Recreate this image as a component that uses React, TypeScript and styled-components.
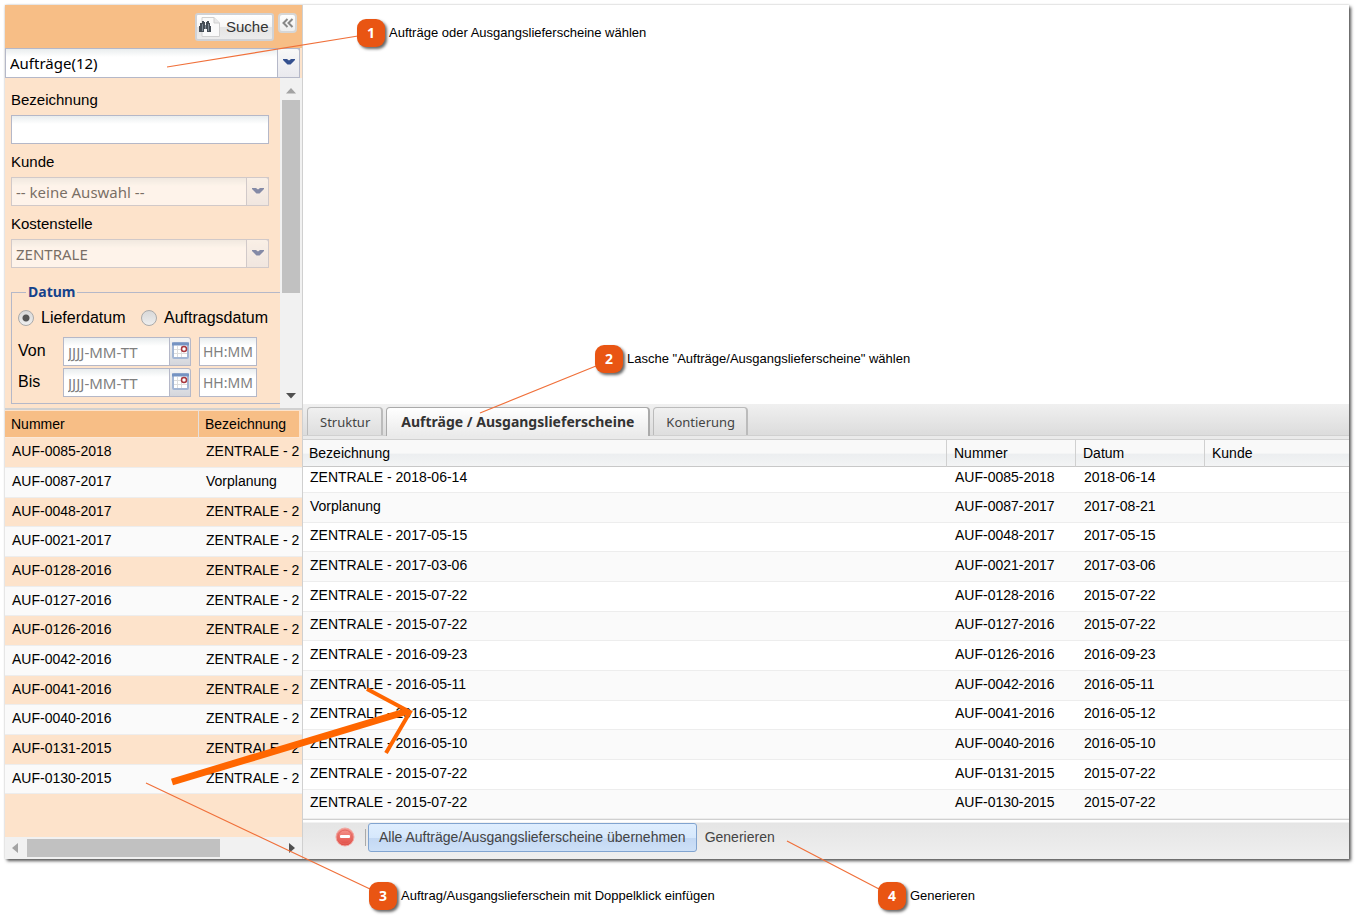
import React from "react";
import styled, { createGlobalStyle, css } from "styled-components";

const sans = `"Liberation Sans", Arial, sans-serif`;
const human = `"Noto Sans", Tahoma, sans-serif`;

const GlobalStyle = createGlobalStyle`
  * { box-sizing: border-box; }
  body { margin: 0; background: #fff; color: #000; font: 14px/20px ${sans}; }
  button, input, select { font: inherit; color: inherit; margin: 0; border-radius: 0; }
`;

const Page = styled.div`
  position: relative;
  min-height: 100vh;
  display: flex;
  flex-direction: column;
  padding: 5px 9px 62px 5px;
  overflow: hidden;
`;

const Frame = styled.div`
  flex: 1;
  display: flex;
  background: #fff;
  box-shadow: 2px 2px 3px #555, 0 0 2px #ccc;
`;

const Sidebar = styled.aside`
  flex: 0 0 298px;
  width: 298px;
  display: flex;
  flex-direction: column;
  background: #fde3cb;
  border-right: 1px solid #d0d0d0;
`;

const SearchBar = styled.header`
  display: flex;
  justify-content: flex-end;
  align-items: flex-start;
  gap: 4px;
  height: 43px;
  padding: 8px 5px 0;
  background: #f7be86;
`;

const SearchButton = styled.button`
  display: flex;
  align-items: center;
  gap: 5px;
  width: 79px;
  height: 28px;
  padding: 0 2px;
  border: 2px solid #d0d2d6;
  border-radius: 3px;
  background: linear-gradient(#fff, #f6f6f6 48%, #e4e4e4 52%, #ececec);
  color: #333;
  font-size: 15px;
`;

const CollapseButton = styled.button`
  display: grid;
  place-items: center;
  width: 19px;
  height: 20px;
  padding: 0;
  border: 2px solid #d6d6d6;
  border-radius: 4px;
  background: linear-gradient(#fff, #eee);
`;

const fieldSkin = css`
  border: 1px solid #b5b8c8;
  background: linear-gradient(#e9edee, #fff 8px);
`;

const Combo = styled.div<{ $muted?: boolean; $top?: boolean }>`
  display: flex;
  position: relative;
  height: ${(p) => (p.$top ? 30 : 29)}px;
  margin-right: ${(p) => (p.$top ? 2 : 0)}px;
  opacity: ${(p) => (p.$muted ? 0.6 : 1)};
`;

const Select = styled.select`
  ${fieldSkin}
  appearance: none;
  width: 100%;
  padding: 0 26px 0 4px;
  font-family: ${human};
  font-size: 15px;
  opacity: 1;
  color: #000;
  &:disabled { color: #222; }
`;

const Trigger = styled.span`
  position: absolute;
  inset: 0 0 0 auto;
  width: 23px;
  display: grid;
  place-items: center;
  padding-bottom: 2px;
  border: 1px solid #b5b8c8;
  border-top-right-radius: 3px;
  background: linear-gradient(#f8f8f8, #e9e9ee);
  pointer-events: none;
`;

const FormArea = styled.div`
  display: flex;
  height: 332px;
  border-bottom: 2px solid #d0d0d0;
`;

const Form = styled.form`
  flex: 1;
  min-width: 0;
  padding: 12px 0 0 6px;
`;

const Field = styled.div`
  display: flex;
  flex-direction: column;
  gap: 5px;
  margin: 0 11px 8px 0;
`;

const Label = styled.label`
  font-size: 15px;
  line-height: 20px;
`;

const TextInput = styled.input`
  ${fieldSkin}
  width: 100%;
  height: 29px;
  padding: 0 4px;
  font-family: ${human};
  font-size: 15px;
`;

const DateGroup = styled.fieldset`
  min-width: 0;
  margin: 14px 0 0;
  padding: 6px 0 6px 6px;
  border: 1px solid #b5b8c8;
  border-right: 0;
`;

const Legend = styled.legend`
  margin-left: 8px;
  padding: 0 2px;
  font: bold 14px/20px ${human};
  color: #15428b;
`;

const RadioRow = styled.div`
  display: flex;
  height: 20px;
  margin-bottom: 9px;
`;

const RadioLabel = styled.label`
  display: flex;
  align-items: center;
  gap: 7px;
  width: 123px;
  font-size: 16px;
  white-space: nowrap;
`;

const Radio = styled.input`
  appearance: none;
  flex: none;
  width: 16px;
  height: 16px;
  border: 1px solid #aaa;
  border-radius: 50%;
  background: linear-gradient(#d8d8d8, #eee);
  &:checked {
    background: radial-gradient(circle, #555 3px, transparent 4px), linear-gradient(#d8d8d8, #eee);
  }
`;

const DateRow = styled.div`
  display: flex;
  margin-top: 2px;
`;

const DateLabel = styled.label`
  width: 45px;
  font-size: 16px;
  line-height: 28px;
`;

const DateInput = styled.input`
  ${fieldSkin}
  width: 107px;
  height: 29px;
  padding: 0 4px;
  font-family: ${human};
  font-size: 15px;
  &::placeholder { color: #808080; opacity: 1; }
`;

const TimeInput = styled(DateInput)`
  width: 58px;
  margin-left: 8px;
  padding: 0 3px;
  font-size: 14px;
`;

const CalendarButton = styled.button`
  display: grid;
  justify-items: center;
  align-content: start;
  width: 21px;
  height: 29px;
  padding: 4px 0 0;
  border: 1px solid #b5b8c8;
  border-left: 0;
  border-top-right-radius: 3px;
  background: linear-gradient(#f4f4f4, #d4d6dc);
`;

const VScroll = styled.div`
  flex: 0 0 22px;
  display: flex;
  flex-direction: column;
  align-items: center;
  padding: 10px 2px 9px 2px;
  background: #f1f1f1;
`;

const VThumb = styled.div`
  width: 18px;
  height: 193px;
  margin: 6px 0 auto;
  background: #c1c1c1;
`;

const HScroll = styled.div`
  display: flex;
  align-items: center;
  height: 22px;
  margin-top: auto;
  padding: 0 7px;
  background: #f1f1f1;
`;

const HThumb = styled.div`
  width: 193px;
  height: 18px;
  margin: 0 auto 0 9px;
  background: #c1c1c1;
`;

const Table = styled.table`
  width: 100%;
  table-layout: fixed;
  border-collapse: separate;
  border-spacing: 0;
  th, td {
    overflow: hidden;
    white-space: nowrap;
    text-align: left;
    font-weight: normal;
  }
  td {
    height: 30px;
    border-bottom: 1px solid #ededed;
  }
  tr:nth-child(3n) td { height: 29px; }
  tr:nth-child(even) td { background: #fafafa; }
`;

const OrderTable = styled(Table)`
  th {
    height: 28px;
    padding: 0 0 0 6px;
    background: #f7be86;
    border-top: 1px solid #fde3cb;
    border-bottom: 1px solid #fbe9da;
  }
  th:first-child { border-right: 1px solid #e6e0dc; }
  th:last-child { border-right: 3px solid #fde3cb; }
  td { padding: 0 0 3px 7px; }
`;

const Main = styled.main`
  flex: 1;
  min-width: 0;
  display: flex;
  flex-direction: column;
`;

const Canvas = styled.section`
  flex: 1;
`;

const TabStrip = styled.div`
  display: flex;
  align-items: flex-end;
  height: 32px;
  padding: 0 4px;
  background: linear-gradient(#f0f0f0, #dcdcdc);
  border-bottom: 1px solid #d0d0d0;
`;

const Tab = styled.button<{ $active?: boolean }>`
  height: 28px;
  margin-right: 3px;
  padding: 0 11px 0 12px;
  border: 1px solid #bbb;
  border-width: 1px 2px 0 1px;
  border-radius: 4px 4px 0 0;
  background: linear-gradient(#f0f0f0, #dedede);
  color: #444;
  font: 13px/20px ${human};
  white-space: nowrap;
  ${(p) =>
    p.$active &&
    css`
      height: 29px;
      padding: 0 14px;
      margin-bottom: -1px;
      border-color: #aaa;
      background: linear-gradient(#fff, #eaeaea);
      color: #333;
      font-weight: bold;
      font-size: 14px;
    `}
`;

const TabBase = styled.div`
  height: 4px;
  background: #eaeaea;
  border-bottom: 1px solid #d0d0d0;
`;

const PositionTable = styled(Table)`
  th {
    height: 27px;
    padding: 0 0 0 6px;
    background: linear-gradient(#f9f9f9 50%, #eceef0 55%, #f3f4f5);
    border-bottom: 1px solid #c8c8c8;
  }
  th + th { padding-left: 7px; border-left: 1px solid #d0d0d0; }
  td { padding: 0 0 4px 7px; }
  td + td { padding-left: 9px; }
  tr:first-child td { height: 26px; padding-bottom: 5px; }
`;

const Toolbar = styled.footer`
  display: flex;
  align-items: center;
  height: 40px;
  padding: 0 32px 5px;
  border-top: 1px solid #d0d0d0;
  background: linear-gradient(#fff 2px, #e5e5e5 3px, #efefef);
  color: #444;
`;

const IconButton = styled.button`
  display: grid;
  padding: 0;
  border: 0;
  background: none;
`;

const Separator = styled.span`
  width: 1px;
  height: 17px;
  margin: 0 2px 0 10px;
  background: #aaa;
`;

const ToolButton = styled.button<{ $hot?: boolean }>`
  height: 29px;
  padding: 0 ${(p) => (p.$hot ? 10 : 7)}px;
  border: 1px solid transparent;
  border-radius: 3px;
  background: none;
  font-size: 14px;
  white-space: nowrap;
  ${(p) =>
    p.$hot &&
    css`
      border-color: #81a4d0;
      background: linear-gradient(#dfeefe, #d6e8fc 50%, #c3d8f3 52%, #cde0f7);
    `}
`;

const Overlay = styled.svg`
  position: absolute;
  top: 0;
  left: 0;
  pointer-events: none;
`;

const Callout = styled.div<{ $x: number; $y: number }>`
  position: absolute;
  left: ${(p) => p.$x}px;
  top: ${(p) => p.$y}px;
  display: flex;
  align-items: center;
  gap: 4px;
  font-size: 13px;
  white-space: nowrap;
`;

const Badge = styled.b`
  width: 28px;
  height: 28px;
  border-radius: 9px;
  background: #e95513;
  box-shadow: 2px 2px 3px #666;
  color: #fff;
  font: bold 14px/28px ${human};
  text-align: center;
`;

const Chevron = () => (
  <svg width="12" height="8" viewBox="0 0 12 8">
    <path d="M0 1h4l2 1.500L8 1h4v1L7.500 6.500h-3L0 2z" fill="#34508f" />
  </svg>
);

const Binoculars = () => (
  <svg width="22" height="22" viewBox="0 0 22 22">
    <path d="M3 1.500h12l5.500 5.500v13.500H3z" fill="#fafafa" stroke="#d0d0d0" />
    <path d="M15 1.500V7h5.500" fill="#e8e8e8" stroke="#d0d0d0" />
    <path d="M3 5h2v1h1v3h1V6h1V5h2v2h1v3h1v6H8v-3H5v3H0v-6h1V7h2z" fill="#454d55" />
    <path d="M3.500 8v7M6.500 9v4M9.500 8v7" stroke="#7f8a94" />
  </svg>
);

const Calendar = () => (
  <svg width="17" height="17" viewBox="0 0 17 17">
    <rect x="1" y="1" width="15" height="15" rx="1" fill="#fff" stroke="#a3b6d4" strokeWidth="2" />
    <path d="M0 2h17" stroke="#7593c2" strokeWidth="3" />
    <path d="M5.500 4v11M9.500 4v11M2 7.500h13M2 11.500h13" stroke="#ddd" />
    <circle cx="12" cy="7" r="2.500" fill="#fff" stroke="#a8383e" strokeWidth="1.500" />
  </svg>
);

const Remove = () => (
  <svg width="20" height="20" viewBox="0 0 20 20">
    <defs>
      <linearGradient id="red" x2="0" y2="1">
        <stop stopColor="#f79a92" />
        <stop offset="1" stopColor="#e0473f" />
      </linearGradient>
    </defs>
    <circle cx="10" cy="10" r="9" fill="url(#red)" stroke="#f0a8a2" />
    <circle cx="10" cy="10" r="7" fill="none" stroke="#e2675f" />
    <rect x="5" y="8" width="10" height="3" rx="1" fill="#fff" />
  </svg>
);

const Arrow = ({ d, dim }: { d: string; dim?: boolean }) => (
  <svg width="10" height="6" viewBox="0 0 10 6">
    <path d={d} fill={dim ? "#a3a3a3" : "#505050"} />
  </svg>
);

const SideArrow = ({ d, dim }: { d: string; dim?: boolean }) => (
  <svg width="6" height="10" viewBox="0 0 6 10">
    <path d={d} fill={dim ? "#a3a3a3" : "#505050"} />
  </svg>
);

const orders: [string, string, string][] = [
  ["AUF-0085-2018", "ZENTRALE - 2018-06-14", "2018-06-14"],
  ["AUF-0087-2017", "Vorplanung", "2017-08-21"],
  ["AUF-0048-2017", "ZENTRALE - 2017-05-15", "2017-05-15"],
  ["AUF-0021-2017", "ZENTRALE - 2017-03-06", "2017-03-06"],
  ["AUF-0128-2016", "ZENTRALE - 2015-07-22", "2015-07-22"],
  ["AUF-0127-2016", "ZENTRALE - 2015-07-22", "2015-07-22"],
  ["AUF-0126-2016", "ZENTRALE - 2016-09-23", "2016-09-23"],
  ["AUF-0042-2016", "ZENTRALE - 2016-05-11", "2016-05-11"],
  ["AUF-0041-2016", "ZENTRALE - 2016-05-12", "2016-05-12"],
  ["AUF-0040-2016", "ZENTRALE - 2016-05-10", "2016-05-10"],
  ["AUF-0131-2015", "ZENTRALE - 2015-07-22", "2015-07-22"],
  ["AUF-0130-2015", "ZENTRALE - 2015-07-22", "2015-07-22"],
];

// The narrow column has room for this many characters.
const SHORT_NAME = 12;

const callouts = [
  { n: 1, x: 357, y: 19, text: "Aufträge oder Ausgangslieferscheine wählen" },
  { n: 2, x: 595, y: 345, text: 'Lasche "Aufträge/Ausgangslieferscheine" wählen' },
  { n: 3, x: 369, y: 882, text: "Auftrag/Ausgangslieferschein mit Doppelklick einfügen" },
  { n: 4, x: 878, y: 882, text: "Generieren" },
];

const DateFields = ({ id, label }: { id: string; label: string }) => (
  <DateRow>
    <DateLabel htmlFor={id}>{label}</DateLabel>
    <DateInput id={id} placeholder="JJJJ-MM-TT" />
    <CalendarButton type="button" aria-label={`${label} Datum`}>
      <Calendar />
    </CalendarButton>
    <TimeInput placeholder="HH:MM" aria-label={`${label} Uhrzeit`} />
  </DateRow>
);

export default function App() {
  return (
    <Page>
      <GlobalStyle />
      <Frame>
        <Sidebar>
          <SearchBar>
            <SearchButton>
              <Binoculars />
              Suche
            </SearchButton>
            <CollapseButton aria-label="Einklappen">
              <svg width="12" height="10" viewBox="0 0 12 10" fill="none" stroke="#888" strokeWidth="2">
                <path d="M5.500 1l-4 4 4 4M10.500 1l-4 4 4 4" />
              </svg>
            </CollapseButton>
          </SearchBar>
          <Combo $top>
            <Select aria-label="Belegart">
              <option>Aufträge(12)</option>
            </Select>
            <Trigger>
              <Chevron />
            </Trigger>
          </Combo>
          <FormArea>
            <Form>
              <Field>
                <Label htmlFor="bez">Bezeichnung</Label>
                <TextInput id="bez" />
              </Field>
              <Field>
                <Label htmlFor="kunde">Kunde</Label>
                <Combo $muted>
                  <Select id="kunde" disabled>
                    <option>-- keine Auswahl --</option>
                  </Select>
                  <Trigger>
                    <Chevron />
                  </Trigger>
                </Combo>
              </Field>
              <Field>
                <Label htmlFor="kst">Kostenstelle</Label>
                <Combo $muted>
                  <Select id="kst" disabled>
                    <option>ZENTRALE</option>
                  </Select>
                  <Trigger>
                    <Chevron />
                  </Trigger>
                </Combo>
              </Field>
              <DateGroup>
                <Legend>Datum</Legend>
                <RadioRow>
                  <RadioLabel>
                    <Radio type="radio" name="datum" defaultChecked />
                    Lieferdatum
                  </RadioLabel>
                  <RadioLabel>
                    <Radio type="radio" name="datum" />
                    Auftragsdatum
                  </RadioLabel>
                </RadioRow>
                <DateFields id="von" label="Von" />
                <DateFields id="bis" label="Bis" />
              </DateGroup>
            </Form>
            <VScroll>
              <Arrow d="M0 5.500L5 0l5 5.500z" dim />
              <VThumb />
              <Arrow d="M0 0h10L5 5.500z" />
            </VScroll>
          </FormArea>
          <OrderTable>
            <colgroup>
              <col width="194" />
              <col />
            </colgroup>
            <thead>
              <tr>
                <th>Nummer</th>
                <th>Bezeichnung</th>
              </tr>
            </thead>
            <tbody>
              {orders.map(([no, name]) => (
                <tr key={no}>
                  <td>{no}</td>
                  <td title={name}>{name.slice(0, SHORT_NAME)}</td>
                </tr>
              ))}
            </tbody>
          </OrderTable>
          <HScroll>
            <SideArrow d="M6 0v10L0 5z" dim />
            <HThumb />
            <SideArrow d="M0 0v10l6-5z" />
          </HScroll>
        </Sidebar>
        <Main>
          <Canvas />
          <TabStrip role="tablist">
            <Tab role="tab">Struktur</Tab>
            <Tab role="tab" $active aria-selected>
              Aufträge / Ausgangslieferscheine
            </Tab>
            <Tab role="tab">Kontierung</Tab>
          </TabStrip>
          <TabBase />
          <PositionTable>
            <colgroup>
              <col />
              <col width="129" />
              <col width="129" />
              <col width="145" />
            </colgroup>
            <thead>
              <tr>
                <th>Bezeichnung</th>
                <th>Nummer</th>
                <th>Datum</th>
                <th>Kunde</th>
              </tr>
            </thead>
            <tbody>
              {orders.map(([no, name, date]) => (
                <tr key={no}>
                  <td>{name}</td>
                  <td>{no}</td>
                  <td>{date}</td>
                  <td />
                </tr>
              ))}
            </tbody>
          </PositionTable>
          <Toolbar>
            <IconButton aria-label="Entfernen">
              <Remove />
            </IconButton>
            <Separator />
            <ToolButton $hot>Alle Aufträge/Ausgangslieferscheine übernehmen</ToolButton>
            <ToolButton>Generieren</ToolButton>
          </Toolbar>
        </Main>
      </Frame>
      <Overlay width="1000" height="915" viewBox="0 0 1000 915" fill="none">
        <g stroke="#f0703a" strokeWidth="1.200">
          <path d="M167 67L358 36M480 413l116-47M146 783l224 106M787 841l92 48" />
        </g>
        <g stroke="#ff6600">
          <path d="M172 782L408 711" strokeWidth="7" />
          <path d="M367 689l43 23-24 41" strokeWidth="4" />
        </g>
      </Overlay>
      {callouts.map((c) => (
        <Callout key={c.n} $x={c.x} $y={c.y}>
          <Badge>{c.n}</Badge>
          {c.text}
        </Callout>
      ))}
    </Page>
  );
}
